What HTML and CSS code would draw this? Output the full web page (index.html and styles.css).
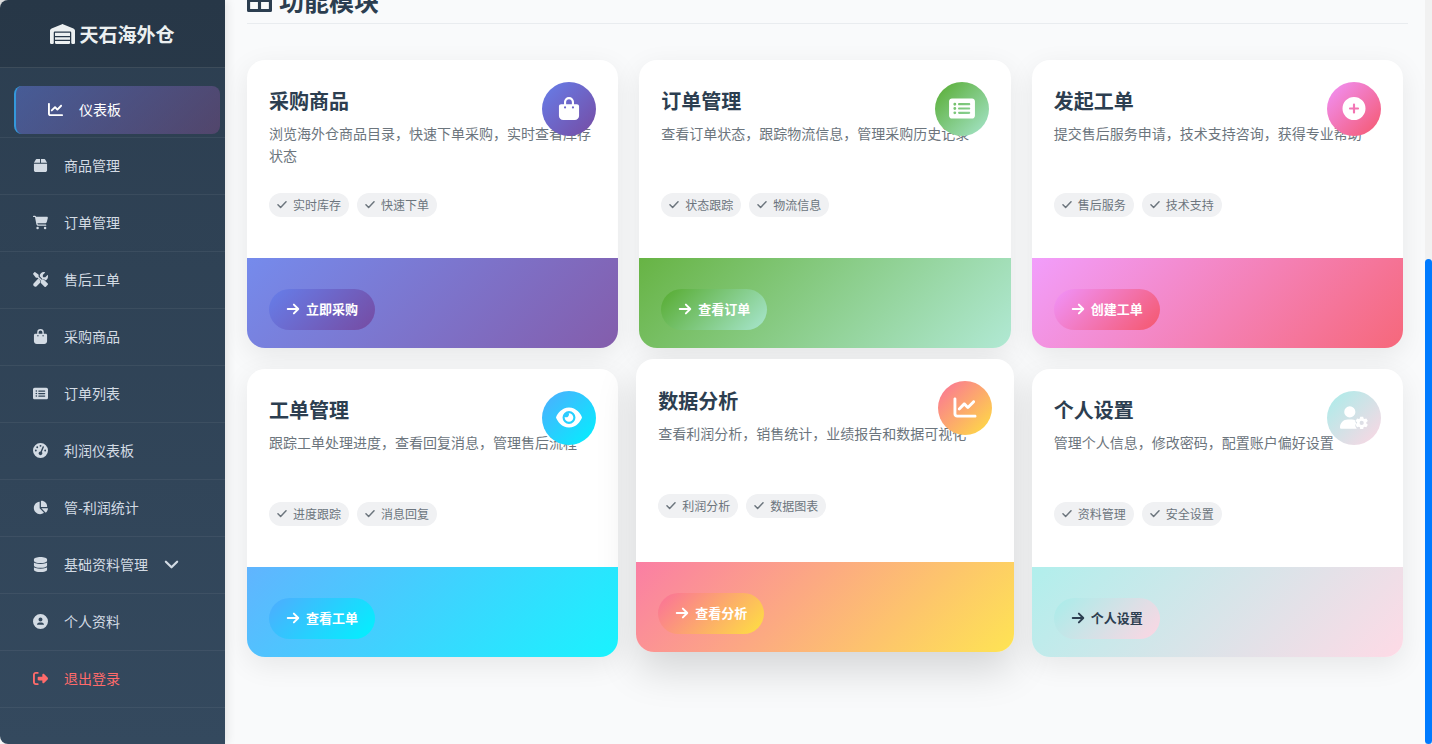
FILE: index.html
```html
<!DOCTYPE html>
<html lang="zh-CN">
<head>
  <meta charset="utf-8">
  <title>天石海外仓</title>
  <link rel="stylesheet" href="styles.css">
</head>
<body>

<!-- icon sprite -->
<svg class="sprite" xmlns="http://www.w3.org/2000/svg">
  <symbol id="i-warehouse" viewBox="0 0 640 512"><path d="M0 488V171c0-26 16-49 40-59L308 5c8-3 16-3 24 0l268 107c24 10 40 33 40 59v317c0 13-11 24-24 24h-48c-13 0-24-11-24-24V224c0-18-14-32-32-32H128c-18 0-32 14-32 32v264c0 13-11 24-24 24H24c-13 0-24-11-24-24zm152 24c-13 0-24-11-24-24v-56h384v56c0 13-11 24-24 24H152zM128 400v-64h384v64H128zm0-96v-80h384v80H128z"/></symbol>
  <symbol id="i-chart" viewBox="0 0 512 512"><path d="M64 64c0-18-14-32-32-32S0 46 0 64v336c0 44 36 80 80 80h400c18 0 32-14 32-32s-14-32-32-32H80c-9 0-16-7-16-16V64zm407 87c12-13 12-33 0-46s-33-12-46 0L320 211l-57-58c-13-12-33-12-46 0L105 265c-12 13-12 33 0 46s33 12 46 0l89-90 57 58c13 12 33 12 46 0l128-128z"/></symbol>
  <symbol id="i-box" viewBox="0 0 448 512"><path d="M50 73C59 48 83 32 110 32h98v128H0l50-87zM240 160V32h98c27 0 51 16 60 41l50 87H240zM0 192h448v224c0 35-29 64-64 64H64c-35 0-64-29-64-64V192z"/></symbol>
  <symbol id="i-cart" viewBox="0 0 576 512"><path d="M0 24C0 11 11 0 24 0h46c22 0 41 13 51 32h411c26 0 45 25 38 50l-41 152c-9 32-38 54-71 54H171l5 29c3 11 12 19 24 19h288c13 0 24 11 24 24s-11 24-24 24H200c-35 0-65-25-71-59L77 54c0-4-4-6-7-6H24C11 48 0 37 0 24zm128 440a48 48 0 1 1 96 0 48 48 0 1 1-96 0zm288 0a48 48 0 1 1 96 0 48 48 0 1 1-96 0z"/></symbol>
  <symbol id="i-tools" viewBox="0 0 512 512"><path d="M79 6C69-2 55-1 47 7L7 47c-8 8-9 22-1 32l80 104c4 6 11 9 19 9h54l109 109c-15 29-10 65 14 90l112 112c12 12 32 12 45 0l64-64c12-13 12-33 0-45L391 282c-25-24-61-29-90-14L192 159v-54c0-8-3-15-9-19L79 6zM20 396a70 70 0 0 0 96 96l135-134c-10-21-13-45-7-68l-64-64L20 396zM512 144c0-11-1-21-4-31-2-9-14-12-21-5l-67 67c-3 3-7 5-11 5h-57c-9 0-16-7-16-16v-57c0-4 2-8 5-11l67-67c7-7 4-19-5-21-10-3-20-4-31-4-80 0-144 64-144 144v1l104 104c29-7 60 1 82 23l16 15c49-25 82-76 82-147z"/></symbol>
  <symbol id="i-bag" viewBox="0 0 448 512"><path fill-rule="evenodd" d="M160 112c0-35 29-64 64-64s64 29 64 64v48H160v-48zm-48 48H48c-27 0-48 21-48 48v208c0 53 43 96 96 96h256c53 0 96-43 96-96V208c0-27-21-48-48-48h-64v-48a112 112 0 0 0-224 0v48zm24 48a24 24 0 1 1 0 48 24 24 0 1 1 0-48zm152 24a24 24 0 1 1 48 0 24 24 0 1 1-48 0z"/></symbol>
  <symbol id="i-list" viewBox="0 0 576 512"><path fill-rule="evenodd" d="M64 32C29 32 0 61 0 96v320c0 35 29 64 64 64h448c35 0 64-29 64-64V96c0-35-29-64-64-64H64zm64 96a32 32 0 1 1 0 64 32 32 0 1 1 0-64zm0 96a32 32 0 1 1 0 64 32 32 0 1 1 0-64zm0 96a32 32 0 1 1 0 64 32 32 0 1 1 0-64zm96-184h224c13 0 24 11 24 24s-11 24-24 24H224c-13 0-24-11-24-24s11-24 24-24zm0 96h224c13 0 24 11 24 24s-11 24-24 24H224c-13 0-24-11-24-24s11-24 24-24zm0 96h224c13 0 24 11 24 24s-11 24-24 24H224c-13 0-24-11-24-24s11-24 24-24z"/></symbol>
  <symbol id="i-gauge" viewBox="0 0 512 512"><path fill-rule="evenodd" d="M0 256a256 256 0 1 1 512 0 256 256 0 1 1-512 0zm288-160a32 32 0 1 0-64 0 32 32 0 1 0 64 0zM256 416c35 0 64-29 64-64 0-17-7-33-18-45l69-161c5-12-1-26-13-31s-26 1-31 13l-69 160h-2c-35 0-64 29-64 64s29 64 64 64zM176 144a32 32 0 1 0-64 0 32 32 0 1 0 64 0zM96 288a32 32 0 1 0 0-64 32 32 0 1 0 0 64zm352-32a32 32 0 1 0-64 0 32 32 0 1 0 64 0z"/></symbol>
  <symbol id="i-pie" viewBox="0 0 576 512"><path d="M304 240V17c0-9 7-17 16-17 124 0 224 100 224 224 0 9-8 16-17 16H304zM32 272C32 151 122 50 239 34c9-1 17 6 17 16v238l157 156c6 7 6 18-2 23-39 28-87 45-139 45C140 512 32 405 32 272zm526 16c10 0 17 8 16 17-8 56-35 106-75 142-6 6-15 5-21-1L320 288h238z"/></symbol>
  <symbol id="i-database" viewBox="0 0 448 512"><path d="M448 80v48c0 44-100 80-224 80S0 172 0 128V80C0 36 100 0 224 0s224 36 224 80zm-55 135c21-8 40-17 55-29v102c0 44-100 80-224 80S0 332 0 288V186c15 12 34 21 55 29 45 16 105 25 169 25s124-9 169-25zM0 346c15 12 34 21 55 29 45 16 105 25 169 25s124-9 169-25c21-8 40-17 55-29v86c0 44-100 80-224 80S0 476 0 432v-86z"/></symbol>
  <symbol id="i-user" viewBox="0 0 512 512"><path fill-rule="evenodd" d="M256 0a256 256 0 1 1 0 512 256 256 0 1 1 0-512zm0 120a68 68 0 1 0 0 136 68 68 0 1 0 0-136zM136 368h240c0-44-34-80-78-80h-84c-44 0-78 36-78 80z"/></symbol>
  <symbol id="i-logout" viewBox="0 0 512 512"><path d="M378 105l121 121c17 16 17 44 0 60L378 407c-23 23-60 5-60-24v-63H192c-18 0-32-14-32-32v-64c0-18 14-32 32-32h126v-63c0-29 37-47 60-24zM160 96H96c-18 0-32 14-32 32v256c0 18 14 32 32 32h64c18 0 32 14 32 32s-14 32-32 32H96c-53 0-96-43-96-96V128c0-53 43-96 96-96h64c18 0 32 14 32 32s-14 32-32 32z"/></symbol>
  <symbol id="i-down" viewBox="0 0 512 512"><path d="M64 160l192 192 192-192" fill="none" stroke="currentColor" stroke-width="76" stroke-linecap="round" stroke-linejoin="round"/></symbol>
  <symbol id="i-check" viewBox="0 0 448 512"><path d="M36 268l124 124L412 128" fill="none" stroke="currentColor" stroke-width="68" stroke-linecap="round" stroke-linejoin="round"/></symbol>
  <symbol id="i-arrow" viewBox="0 0 448 512"><path d="M32 256h376M256 96l160 160-160 160" fill="none" stroke="currentColor" stroke-width="72" stroke-linecap="round" stroke-linejoin="round"/></symbol>
  <symbol id="i-plus" viewBox="0 0 512 512"><path fill-rule="evenodd" d="M256 0a256 256 0 1 1 0 512 256 256 0 1 1 0-512zm-24 344c0 13 11 24 24 24s24-11 24-24v-64h64c13 0 24-11 24-24s-11-24-24-24h-64v-64c0-13-11-24-24-24s-24 11-24 24v64h-64c-13 0-24 11-24 24s11 24 24 24h64v64z"/></symbol>
  <symbol id="i-eye" viewBox="0 0 576 512"><path fill-rule="evenodd" d="M288 32c-81 0-146 37-193 80C48 156 17 208 2 244c-3 8-3 16 0 24 15 36 46 88 93 132 47 43 112 80 193 80s146-37 193-80c47-44 78-96 93-132 3-8 3-16 0-24-15-36-46-88-93-132-47-43-112-80-193-80zm0 80a144 144 0 1 1 0 288 144 144 0 1 1 0-288z"/><path d="M288 160a96 96 0 1 1-96 96c0-4 0-8 1-11 9 5 20 8 31 8 35 0 64-29 64-64 0-10-3-20-7-29h7z"/></symbol>
  <symbol id="i-usercog" viewBox="0 0 640 512"><path d="M224 0a128 128 0 1 1 0 256 128 128 0 1 1 0-256zM178 304h92c30 0 59 8 84 21-9 20-3 46 18 58l9 5v8l-9 5c-24 14-28 44-15 67 8 16 17 30 28 44H30c-17 0-30-13-30-30 0-98 80-178 178-178z"/><path fill-rule="evenodd" d="M462 236h68l8 44 22 12 42-15 34 59-34 30v26l34 30-34 59-42-15-22 12-8 44h-68l-8-44-22-12-42 15-34-59 34-30v-26l-34-30 34-59 42 15 22-12 8-44zm34 95a48 48 0 1 0 0 96 48 48 0 1 0 0-96z"/></symbol>
  <symbol id="i-grid" viewBox="0 0 512 512"><path d="M32 52h448v408H32zM256 52v408M32 256h448" fill="none" stroke="currentColor" stroke-width="64" stroke-linejoin="round"/></symbol>
</svg>

<div class="app">
  <aside class="sidebar">
    <div class="brand">
      <svg class="icon"><use href="#i-warehouse"/></svg>
      <span>天石海外仓</span>
    </div>
    <nav>
      <ul class="menu">
        <li class="active"><a href="#"><svg class="icon"><use href="#i-chart"/></svg>仪表板</a></li>
        <li><a href="#"><svg class="icon"><use href="#i-box"/></svg>商品管理</a></li>
        <li><a href="#"><svg class="icon"><use href="#i-cart"/></svg>订单管理</a></li>
        <li><a href="#"><svg class="icon"><use href="#i-tools"/></svg>售后工单</a></li>
        <li><a href="#"><svg class="icon"><use href="#i-bag"/></svg>采购商品</a></li>
        <li><a href="#"><svg class="icon"><use href="#i-list"/></svg>订单列表</a></li>
        <li><a href="#"><svg class="icon"><use href="#i-gauge"/></svg>利润仪表板</a></li>
        <li><a href="#"><svg class="icon"><use href="#i-pie"/></svg>管-利润统计</a></li>
        <li><a href="#"><svg class="icon"><use href="#i-database"/></svg>基础资料管理<svg class="icon caret"><use href="#i-down"/></svg></a></li>
        <li><a href="#"><svg class="icon"><use href="#i-user"/></svg>个人资料</a></li>
        <li class="logout"><a href="#"><svg class="icon"><use href="#i-logout"/></svg>退出登录</a></li>
      </ul>
    </nav>
  </aside>

  <main class="content">
    <h2 class="section-title"><svg class="icon"><use href="#i-grid"/></svg>功能模块</h2>

    <div class="modules">
      <section class="card purchase">
        <div class="card-body">
          <h3>采购商品</h3>
          <p>浏览海外仓商品目录，快速下单采购，实时查看库存状态</p>
          <div class="tags">
            <span class="tag"><svg class="icon"><use href="#i-check"/></svg>实时库存</span>
            <span class="tag"><svg class="icon"><use href="#i-check"/></svg>快速下单</span>
          </div>
          <div class="card-icon"><svg class="icon"><use href="#i-bag"/></svg></div>
        </div>
        <div class="card-footer">
          <a class="btn" href="#"><svg class="icon"><use href="#i-arrow"/></svg>立即采购</a>
        </div>
      </section>

      <section class="card orders">
        <div class="card-body">
          <h3>订单管理</h3>
          <p>查看订单状态，跟踪物流信息，管理采购历史记录</p>
          <div class="tags">
            <span class="tag"><svg class="icon"><use href="#i-check"/></svg>状态跟踪</span>
            <span class="tag"><svg class="icon"><use href="#i-check"/></svg>物流信息</span>
          </div>
          <div class="card-icon"><svg class="icon"><use href="#i-list"/></svg></div>
        </div>
        <div class="card-footer">
          <a class="btn" href="#"><svg class="icon"><use href="#i-arrow"/></svg>查看订单</a>
        </div>
      </section>

      <section class="card create">
        <div class="card-body">
          <h3>发起工单</h3>
          <p>提交售后服务申请，技术支持咨询，获得专业帮助</p>
          <div class="tags">
            <span class="tag"><svg class="icon"><use href="#i-check"/></svg>售后服务</span>
            <span class="tag"><svg class="icon"><use href="#i-check"/></svg>技术支持</span>
          </div>
          <div class="card-icon"><svg class="icon"><use href="#i-plus"/></svg></div>
        </div>
        <div class="card-footer">
          <a class="btn" href="#"><svg class="icon"><use href="#i-arrow"/></svg>创建工单</a>
        </div>
      </section>

      <section class="card tickets">
        <div class="card-body">
          <h3>工单管理</h3>
          <p>跟踪工单处理进度，查看回复消息，管理售后流程</p>
          <div class="tags">
            <span class="tag"><svg class="icon"><use href="#i-check"/></svg>进度跟踪</span>
            <span class="tag"><svg class="icon"><use href="#i-check"/></svg>消息回复</span>
          </div>
          <div class="card-icon"><svg class="icon"><use href="#i-eye"/></svg></div>
        </div>
        <div class="card-footer">
          <a class="btn" href="#"><svg class="icon"><use href="#i-arrow"/></svg>查看工单</a>
        </div>
      </section>

      <section class="card analysis raised">
        <div class="card-body">
          <h3>数据分析</h3>
          <p>查看利润分析，销售统计，业绩报告和数据可视化</p>
          <div class="tags">
            <span class="tag"><svg class="icon"><use href="#i-check"/></svg>利润分析</span>
            <span class="tag"><svg class="icon"><use href="#i-check"/></svg>数据图表</span>
          </div>
          <div class="card-icon"><svg class="icon"><use href="#i-chart"/></svg></div>
        </div>
        <div class="card-footer">
          <a class="btn" href="#"><svg class="icon"><use href="#i-arrow"/></svg>查看分析</a>
        </div>
      </section>

      <section class="card profile">
        <div class="card-body">
          <h3>个人设置</h3>
          <p>管理个人信息，修改密码，配置账户偏好设置</p>
          <div class="tags">
            <span class="tag"><svg class="icon"><use href="#i-check"/></svg>资料管理</span>
            <span class="tag"><svg class="icon"><use href="#i-check"/></svg>安全设置</span>
          </div>
          <div class="card-icon"><svg class="icon"><use href="#i-usercog"/></svg></div>
        </div>
        <div class="card-footer">
          <a class="btn" href="#"><svg class="icon"><use href="#i-arrow"/></svg>个人设置</a>
        </div>
      </section>
    </div>
  </main>

  <div class="scrollbar"><div class="thumb"></div></div>
</div>

</body>
</html>
```
FILE: styles.css
```css
* {
  box-sizing: border-box;
}
body {
  margin: 0;
  background: #f9fafb;
  font-family: "Noto Sans CJK SC", sans-serif;
  font-size: 14px;
  color: #2c3e50;
}
a {
  color: inherit;
  text-decoration: none;
}
.sprite {
  display: none;
}
.icon {
  width: 16px;
  height: 16px;
  fill: currentColor;
  flex: none;
}
.app {
  display: flex;
  height: 100vh;
  overflow: hidden;
}

/* sidebar */
.sidebar {
  width: 225px;
  flex: none;
  border-radius: 8px 0 0 8px;
  background: linear-gradient(180deg, #2c3e50, #34495e);
  box-shadow: 2px 0 10px rgba(0, 0, 0, 0.1);
  color: #d3dbe4;
}
.brand {
  display: flex;
  align-items: center;
  justify-content: center;
  gap: 4px;
  height: 68px;
  border-bottom: 1px solid rgba(255, 255, 255, 0.1);
  background: rgba(0, 0, 0, 0.1);
  color: #ecf0f1;
  font-size: 19px;
  font-weight: 700;
}
.brand .icon {
  width: 25px;
  height: 20px;
}
.menu {
  margin: 0;
  padding: 13px 0 0;
  list-style: none;
}
.menu li {
  height: 57px;
  border-bottom: 1px solid rgba(255, 255, 255, 0.06);
}
.menu a {
  display: flex;
  align-items: center;
  gap: 16px;
  height: 56px;
  padding: 0 0 2px 33px;
}
.menu .active {
  padding: 5px 5px 3px 14px;
}
.menu .active a {
  height: 48px;
  padding-left: 32px;
  border-left: 2px solid #3498db;
  border-radius: 8px;
  background: linear-gradient(135deg, rgba(102, 126, 234, 0.45), rgba(118, 75, 132, 0.5));
  color: #fff;
}
.menu .logout {
  color: #ff6b6b;
}
.menu .icon {
  width: 15px;
  height: 15px;
}

/* content */
.content {
  flex: 1;
  min-width: 0;
  padding: 0 22px;
}
.section-title {
  display: flex;
  align-items: center;
  gap: 7px;
  height: 42px;
  margin: -18px -5px 36px 0;
  padding-bottom: 5px;
  border-bottom: 1px solid #e9ecef;
  font-size: 25px;
  font-weight: 700;
}
.section-title .icon {
  width: 25px;
  height: 25px;
}
.modules {
  display: grid;
  grid-template-columns: repeat(3, 1fr);
  gap: 21px;
}
.card {
  display: flex;
  flex-direction: column;
  border-radius: 18px;
  background: #fff;
  box-shadow: 0 8px 28px rgba(0, 0, 0, 0.08);
  overflow: hidden;
}
.card-body {
  position: relative;
  flex: 1;
  padding: 22px 22px 41px;
}
.card h3 {
  margin: 0 0 3px;
  font-size: 20px;
  line-height: 37px;
}
.card p {
  height: 44px;
  margin: 0 0 27px;
  color: #6c757d;
  line-height: 22px;
}
.tags {
  display: flex;
  gap: 8px;
}
.tag {
  display: flex;
  align-items: center;
  gap: 6px;
  height: 24px;
  padding: 0 8px 2px;
  border-radius: 12px;
  background: #f0f1f3;
  color: #6c757d;
  font-size: 12px;
}
.tag .icon {
  width: 10px;
  height: 11px;
}
.card-icon {
  position: absolute;
  top: 22px;
  right: 22px;
  display: flex;
  align-items: center;
  justify-content: center;
  width: 54px;
  height: 54px;
  padding-bottom: 2px;
  border-radius: 50%;
  background: var(--tone);
  color: #fff;
}
.card-icon .icon {
  width: 28px;
  height: 23px;
}
.card-footer {
  position: relative;
  display: flex;
  align-items: center;
  height: 90px;
  padding: 13px 22px 0;
}
.card-footer::before {
  content: "";
  position: absolute;
  inset: 0;
  background: var(--tone);
  opacity: 0.9;
}
.btn {
  position: relative;
  display: flex;
  align-items: center;
  gap: 6px;
  height: 41px;
  padding: 0 17px 2px;
  border-radius: 21px;
  background: var(--tone);
  color: #fff;
  font-size: 13px;
  font-weight: 700;
}
.btn .icon {
  width: 14px;
  height: 14px;
}

/* hovered card grows over its neighbours */
.raised {
  margin: -10px -3px 5px;
  box-shadow: 0 18px 40px rgba(0, 0, 0, 0.15);
}
.raised .card-body {
  padding-top: 23px;
}
.raised .tags {
  margin-top: 28px;
}

.purchase { --tone: linear-gradient(135deg, #667eea, #764ba2); }
.orders { --tone: linear-gradient(135deg, #56ab2f, #a8e6cf); }
.create { --tone: linear-gradient(135deg, #f093fb, #f5576c); }
.tickets { --tone: linear-gradient(135deg, #4facfe, #00f2fe); }
.analysis { --tone: linear-gradient(135deg, #fa709a, #fee140); }
.profile { --tone: linear-gradient(135deg, #a8edea, #fed6e3); }
.profile .btn { color: #2c3e50; }

/* page scrollbar */
.scrollbar {
  display: flex;
  flex: none;
  width: 7px;
  padding-top: 259px;
  background: #f1f1f1;
}
.thumb {
  flex: 1;
  border-radius: 4px;
  background: #007bff;
}
```
